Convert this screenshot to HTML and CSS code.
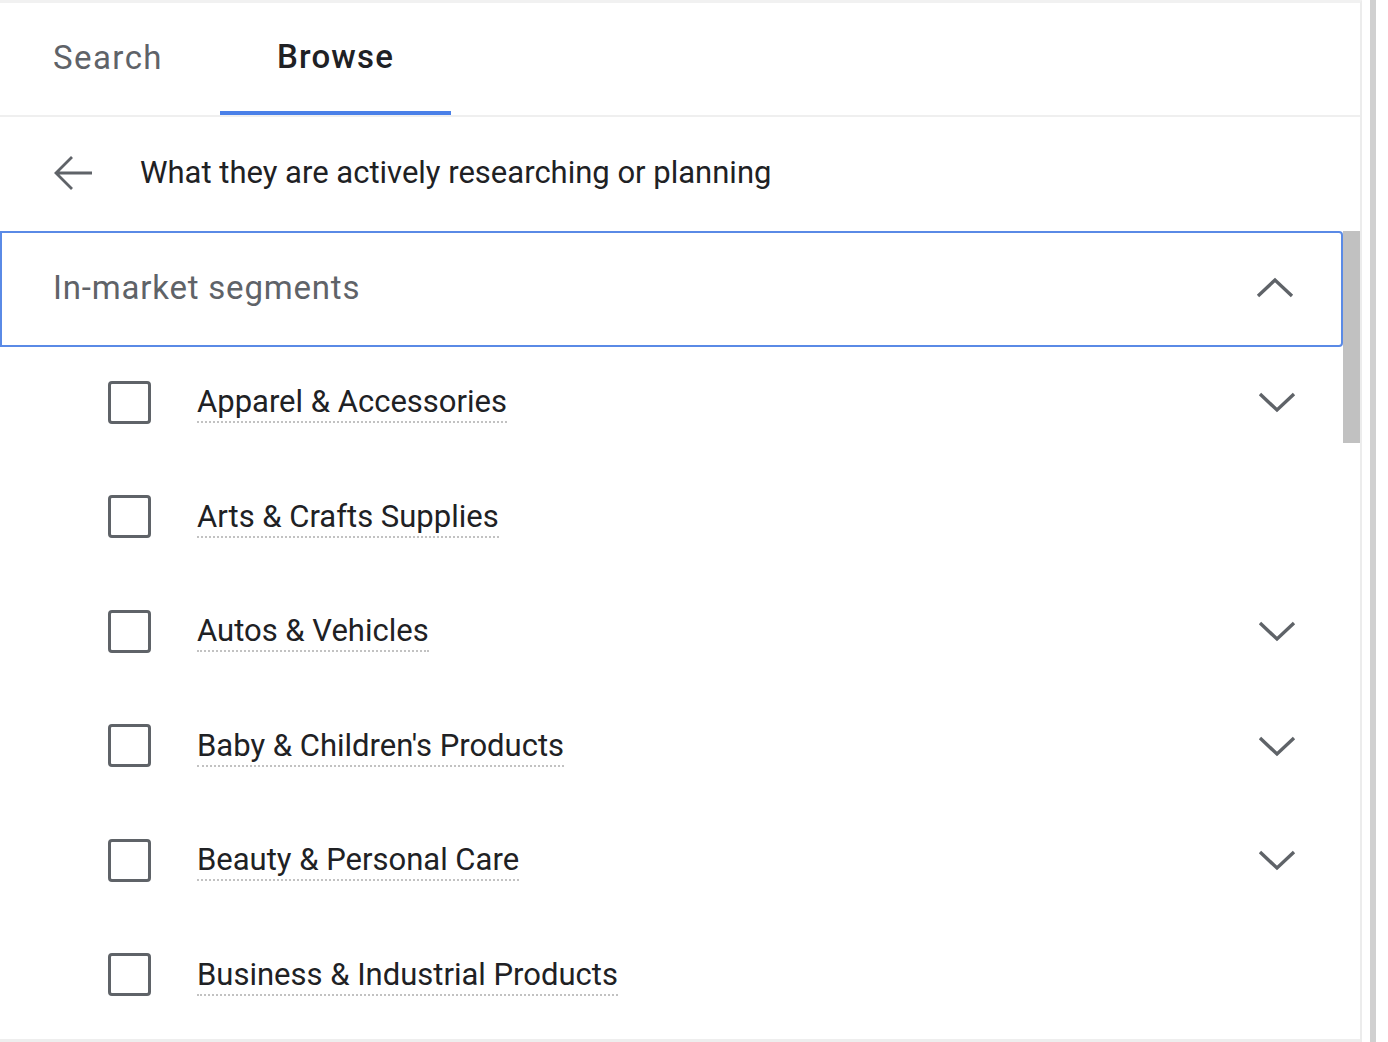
FILE: index.html
```html
<!DOCTYPE html>
<html lang="en">
<head>
    <meta charset="UTF-8">
    <title>Browse segments</title>
    <link rel="stylesheet" href="styles.css">
</head>
<body>

    <div class="page">
        <div class="panel">
            <div class="tabs">
                <div class="tab tab-search">Search</div>
                <div class="tab tab-browse active">Browse</div>
            </div>

            <div class="back-row">
                <svg class="back-icon" width="40" height="40" viewBox="0 0 40 40">
                    <path d="M39 20H3M19 4L3 20L19 36" fill="none" stroke="#5f6368" stroke-width="2.8"/>
                </svg>
                <span class="back-text">What they are actively researching or planning</span>
            </div>

            <div class="list-area">
                <div class="list-content">
                    <div class="section-head">
                        <span>In-market segments</span>
                        <svg class="chevron" width="40" height="26" viewBox="0 0 40 26">
                            <path d="M3 21L20 5L37 21" fill="none" stroke="#5f6368" stroke-width="3.4"/>
                        </svg>
                    </div>

                    <div class="item">
                        <span class="box"></span>
                        <span class="label">Apparel &amp; Accessories</span>
                        <svg class="chevron" width="40" height="26" viewBox="0 0 40 26">
                            <path d="M3 5L20 21L37 5" fill="none" stroke="#5f6368" stroke-width="3.4"/>
                        </svg>
                    </div>
                    <div class="item">
                        <span class="box"></span>
                        <span class="label">Arts &amp; Crafts Supplies</span>
                    </div>
                    <div class="item">
                        <span class="box"></span>
                        <span class="label">Autos &amp; Vehicles</span>
                        <svg class="chevron" width="40" height="26" viewBox="0 0 40 26">
                            <path d="M3 5L20 21L37 5" fill="none" stroke="#5f6368" stroke-width="3.4"/>
                        </svg>
                    </div>
                    <div class="item">
                        <span class="box"></span>
                        <span class="label">Baby &amp; Children's Products</span>
                        <svg class="chevron" width="40" height="26" viewBox="0 0 40 26">
                            <path d="M3 5L20 21L37 5" fill="none" stroke="#5f6368" stroke-width="3.4"/>
                        </svg>
                    </div>
                    <div class="item">
                        <span class="box"></span>
                        <span class="label">Beauty &amp; Personal Care</span>
                        <svg class="chevron" width="40" height="26" viewBox="0 0 40 26">
                            <path d="M3 5L20 21L37 5" fill="none" stroke="#5f6368" stroke-width="3.4"/>
                        </svg>
                    </div>
                    <div class="item">
                        <span class="box"></span>
                        <span class="label">Business &amp; Industrial Products</span>
                    </div>
                </div>

                <div class="scroll-track">
                    <div class="scroll-thumb"></div>
                </div>
            </div>
        </div>
        <div class="gutter"></div>
    </div>

</body>
</html>
```

FILE: styles.css
```css
body {
    margin: 0;
    font-family: Roboto, "Liberation Sans", Arial, sans-serif;
    background: #ffffff;
    color: #202124;
}
.page {
    display: flex;
    height: 1042px;
    overflow: hidden;
}
.panel {
    width: 1360px;
    border-top: 3px solid #f1f1f1;
    border-right: 2px solid #ececec;
    display: flex;
    flex-direction: column;
}
.gutter {
    width: 6px;
    margin-left: 8px;
    background: #d0d0d0;
}

/* tabs */
.tabs {
    display: flex;
    height: 112px;
    border-bottom: 2px solid #efefef;
}
.tab {
    display: flex;
    align-items: center;
    justify-content: center;
    font-size: 33px;
    letter-spacing: 1.4px;
    color: #5f6368;
    padding-bottom: 4px;
    box-sizing: border-box;
}
.tab-search {
    width: 216px;
}
.tab-browse {
    width: 231px;
    margin-left: 4px;
}
.tab.active {
    color: #202124;
    font-weight: 500;
    letter-spacing: 1.2px;
    border-bottom: 4px solid #4a80e8;
    padding-bottom: 2px;
}

/* back row */
.back-row {
    display: flex;
    align-items: center;
    height: 114px;
    padding-bottom: 3px;
    box-sizing: border-box;
}
.back-icon {
    margin-left: 53px;
    margin-right: 47px;
}
.back-text {
    font-size: 31px;
    color: #202124;
}

/* list */
.list-area {
    flex: 1;
    display: flex;
    border-bottom: 3px solid #eeeeee;
}
.list-content {
    flex: 1;
}
.section-head {
    height: 116px;
    box-sizing: border-box;
    border: 2px solid #5a8ae6;
    border-radius: 0 4px 4px 0;
    display: flex;
    align-items: center;
    padding-left: 51px;
    padding-right: 46px;
    padding-bottom: 3px;
    font-size: 33px;
    letter-spacing: 0.8px;
    color: #5f6368;
    margin-bottom: -2px;
}
.section-head span {
    flex: 1;
}
.item {
    height: 114.5px;
    display: flex;
    align-items: center;
    padding-left: 108px;
    padding-right: 46px;
}
.box {
    width: 43px;
    height: 43px;
    box-sizing: border-box;
    border: 3.5px solid #5f6368;
    border-radius: 4px;
    margin-right: 46px;
}
.label {
    font-size: 31px;
    color: #202124;
    border-bottom: 2px dotted #c2c2c2;
    padding-bottom: 1px;
    margin-top: 2px;
}
.item .chevron {
    margin-left: auto;
}
.scroll-track {
    width: 17px;
}
.scroll-thumb {
    height: 212px;
    background: #c1c1c1;
}
```
